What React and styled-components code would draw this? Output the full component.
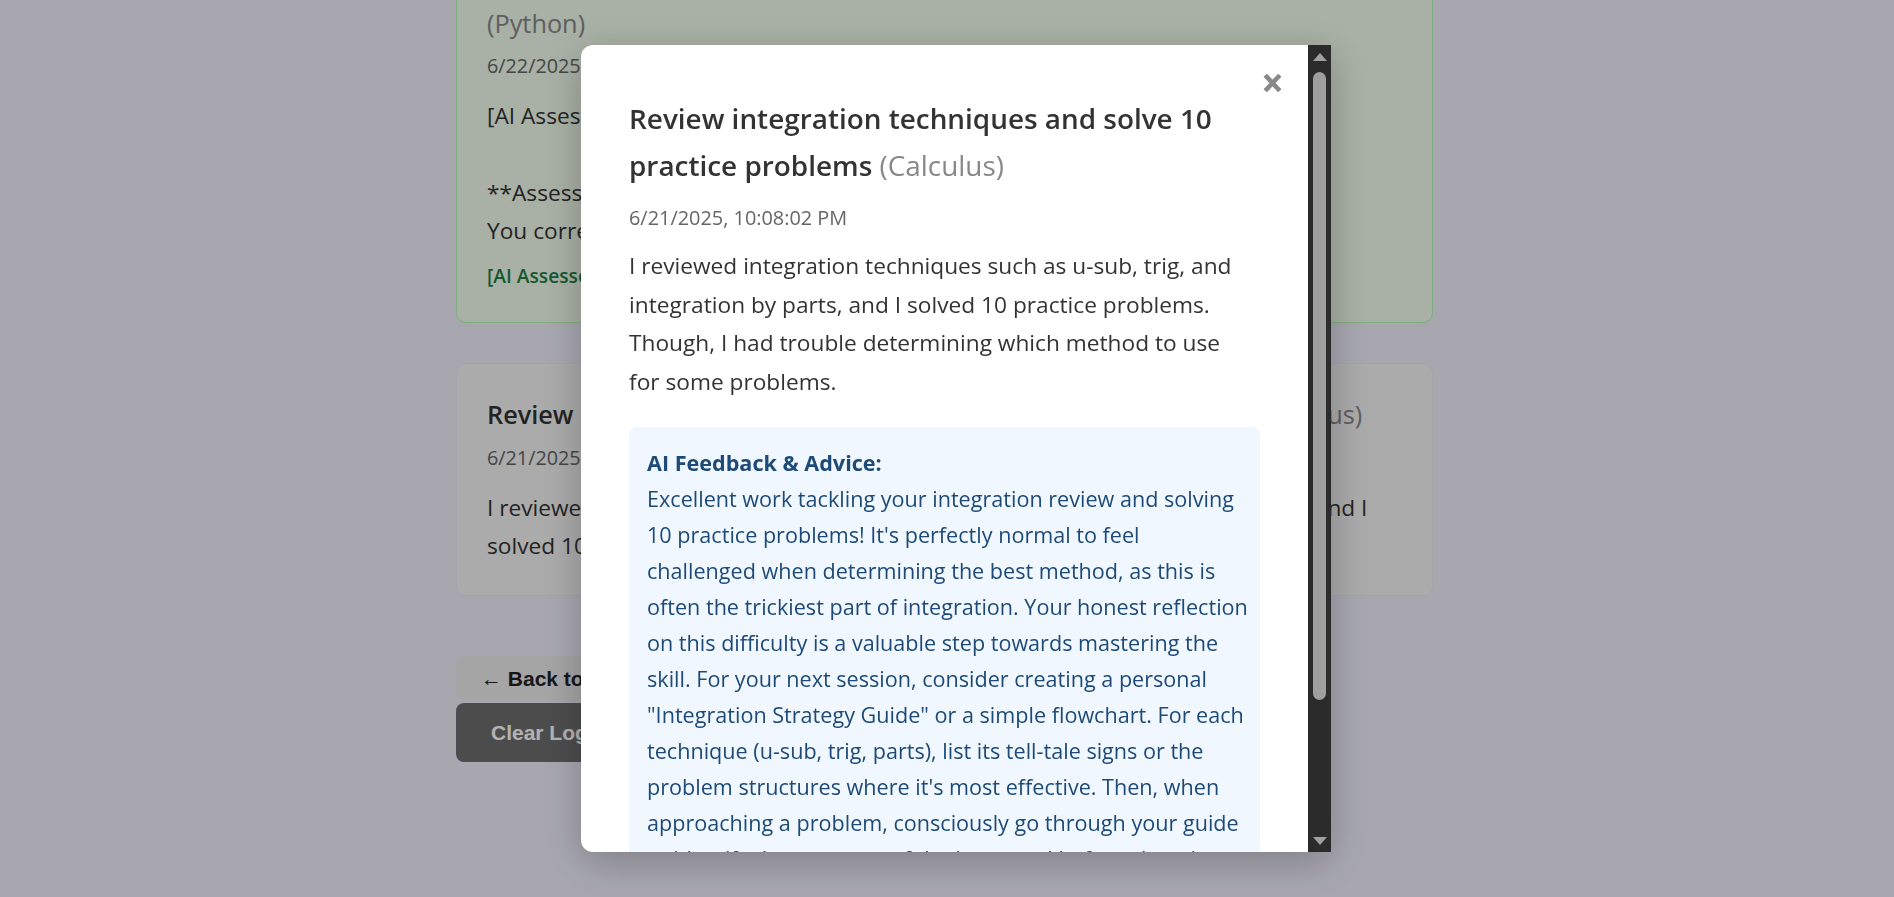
import React from 'react';
import styled, { createGlobalStyle } from 'styled-components';

const logs = [
  {
    id: 1,
    task: 'Build a to-do list CLI app using classes, file I/O, and proper error handling',
    subject: 'Python',
    date: '6/22/2025, 9:14:37 AM',
    text: '[AI Assessed: 8/10]\n\n**Assessment:** Solid work.\nYou correctly used classes.',
    assessed: true,
  },
  {
    id: 2,
    task: 'Review integration techniques and solve 10 practice problems',
    subject: 'Calculus',
    date: '6/21/2025, 10:08:02 PM',
    text: 'I reviewed integration techniques such as u-sub, trig, and integration by parts, and I solved 10 practice problems. Though, I had trouble determinin...',
    assessed: false,
  },
];

const feedback =
  'Excellent work tackling your integration review and solving 10 practice problems! It\'s perfectly normal to feel challenged when determining the best method, as this is often the trickiest part of integration. Your honest reflection on this difficulty is a valuable step towards mastering the skill. For your next session, consider creating a personal "Integration Strategy Guide" or a simple flowchart. For each technique (u-sub, trig, parts), list its tell-tale signs or the problem structures where it\'s most effective. Then, when approaching a problem, consciously go through your guide to identify the structure of the integrand before choosing a method. This deliberate practice will build your intuition and make technique selection feel natural. Keep it up!';

const App = () => {
  return (
    <>
      <GlobalStyle />
      <Page>
        <Container>
          {logs.map((log) => (
            <LogCard key={log.id} $assessed={log.assessed}>
              <CardTitle>
                {log.task} <Subject>({log.subject})</Subject>
              </CardTitle>
              <CardDate>{log.date}</CardDate>
              <CardText>{log.text}</CardText>
              {log.assessed ? <AssessedNote>[AI Assessed ✓]</AssessedNote> : null}
            </LogCard>
          ))}
          <ButtonColumn>
            <BackButton>← Back to Dashboard</BackButton>
            <ClearButton>Clear Log History</ClearButton>
          </ButtonColumn>
        </Container>
      </Page>

      <Overlay>
        <Modal>
          <ModalBody>
            <CloseButton title="Close">
              <svg width="19" height="20" viewBox="0 0 19 20">
                <path d="M2.2 2.2 L16.8 17.8 M16.8 2.2 L2.2 17.8" stroke="#888" strokeWidth="4.6" />
              </svg>
            </CloseButton>
            <ModalTitle>
              Review integration techniques and solve 10 practice problems{' '}
              <Subject>(Calculus)</Subject>
            </ModalTitle>
            <ModalDate>6/21/2025, 10:08:02 PM</ModalDate>
            <ModalText>
              I reviewed integration techniques such as u-sub, trig, and integration by parts,
              and I solved 10 practice problems. Though, I had trouble determining which method
              to use for some problems.
            </ModalText>
            <FeedbackBox>
              <FeedbackHeading>AI Feedback &amp; Advice:</FeedbackHeading>
              {feedback}
            </FeedbackBox>
          </ModalBody>
          <ScrollRail>
            <ScrollArrow $dir="up" />
            <ScrollTrack>
              <ScrollThumb $size={83} />
            </ScrollTrack>
            <ScrollArrow $dir="down" />
          </ScrollRail>
        </Modal>
      </Overlay>
    </>
  );
};

export default App;

const GlobalStyle = createGlobalStyle`
  html, body {
    margin: 0;
    padding: 0;
  }

  body {
    background-color: #f1f0fd;
    font-family: 'Open Sans', 'Noto Sans', sans-serif;
    color: #333;
    overflow: hidden;
  }

  * {
    box-sizing: border-box;
  }
`;

const Page = styled.div`
  height: 100vh;
  overflow: hidden;
  padding-right: 5px;
`;

const Container = styled.main`
  display: flex;
  flex-direction: column;
  width: 977px;
  margin: -70px auto 0;
`;

const LogCard = styled.article`
  margin-bottom: 40px;
  padding: 30px;
  background-color: ${(props) => (props.$assessed ? '#f2fced' : '#f5f5f5')};
  border: ${(props) => (props.$assessed ? '1.5px solid #b4f8b4' : '1px solid #ececec')};
  border-radius: 10px;
`;

const CardTitle = styled.h3`
  margin: 0 0 6px;
  font-size: 25.3px;
  font-weight: 600;
  line-height: 41.6px;
  color: #333;
`;

const Subject = styled.span`
  font-weight: 400;
  color: #888;
`;

const CardDate = styled.p`
  margin: 0 0 14px;
  font-size: 19.8px;
  line-height: 32.6px;
  color: #666;
`;

const CardText = styled.p`
  margin: 0;
  font-size: 22.7px;
  line-height: 38.4px;
  white-space: pre-wrap;
  color: #333;
`;

const AssessedNote = styled.p`
  margin: 10px 0 0;
  font-size: 19.2px;
  font-weight: 600;
  line-height: 32px;
  color: #1e7e45;
`;

const ButtonColumn = styled.div`
  display: flex;
  flex-direction: column;
  align-items: flex-start;
  gap: 2px;
  margin-top: 20px;
`;

const BackButton = styled.button`
  height: 45px;
  padding: 0 25px;
  font-family: 'Liberation Sans', Arial, sans-serif;
  font-size: 21px;
  font-weight: bold;
  color: #222;
  background-color: #ececec;
  border: none;
  border-radius: 8px;
`;

const ClearButton = styled(BackButton)`
  height: 59px;
  padding: 0 35px;
  color: #fff;
  background-color: #6e6e6e;
`;

const Overlay = styled.div`
  position: fixed;
  inset: 0;
  display: flex;
  align-items: center;
  justify-content: center;
  padding-left: 18px;
  background-color: rgba(0, 0, 0, 0.3);
`;

const Modal = styled.div`
  display: flex;
  width: 750px;
  max-height: 90vh;
  overflow: hidden;
  background-color: white;
  border-radius: 12px 0 0 12px;
  box-shadow: 0 10px 40px rgba(0, 0, 0, 0.25);
`;

const ModalBody = styled.div`
  position: relative;
  flex: 1;
  min-width: 0;
  overflow-y: auto;
  scrollbar-width: none;
  padding: 50px 48px 48px;
`;

const ScrollRail = styled.div`
  display: flex;
  flex-direction: column;
  flex: 0 0 23px;
  background-color: #2b2b2b;
`;

const ScrollArrow = styled.div`
  display: flex;
  align-items: center;
  justify-content: center;
  height: 24px;
  padding-top: ${(props) => (props.$dir === 'up' ? '0' : '1px')};

  &::before {
    content: '';
    width: 0;
    height: 0;
    border-left: 7.5px solid transparent;
    border-right: 7.5px solid transparent;
    ${(props) =>
      props.$dir === 'up'
        ? 'border-bottom: 8px solid #a0a0a0;'
        : 'border-top: 8px solid #a0a0a0;'}
  }
`;

const ScrollTrack = styled.div`
  flex: 1;
  padding: 3px 5px 0;
`;

const ScrollThumb = styled.div`
  height: ${(props) => props.$size}%;
  background-color: #9f9f9f;
  border-radius: 7px;
`;

const CloseButton = styled.button`
  position: absolute;
  top: 28px;
  right: 26px;
  display: flex;
  padding: 0;
  background: none;
  border: none;
  cursor: pointer;
`;

const ModalTitle = styled.h2`
  margin: 0 0 13px;
  font-size: 27.9px;
  font-weight: 600;
  line-height: 47px;
  color: #333;
`;

const ModalDate = styled.p`
  margin: 0 0 13px;
  font-size: 19.9px;
  line-height: 32px;
  color: #666;
`;

const ModalText = styled.p`
  max-width: 610px;
  margin: 0 0 25px;
  font-size: 22.7px;
  line-height: 38.7px;
  color: #333;
`;

const FeedbackBox = styled.div`
  padding: 18px 12px 18px 18px;
  font-size: 21.6px;
  line-height: 36px;
  color: #1e4a77;
  background-color: #f0f7ff;
  border-radius: 8px;
`;

const FeedbackHeading = styled.strong`
  display: block;
  font-weight: 700;
`;
